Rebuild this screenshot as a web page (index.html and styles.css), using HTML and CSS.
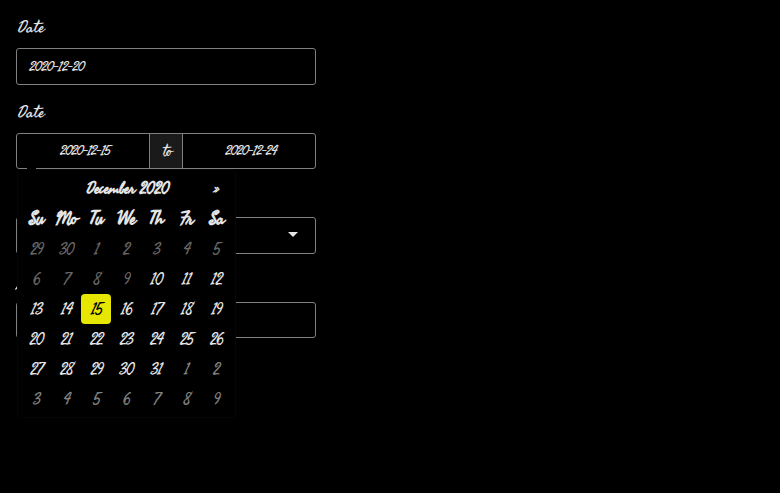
FILE: index.html
```html
<!DOCTYPE html>
<html lang="en">
<head>
<meta charset="utf-8">
<title>Date form</title>
<link rel="stylesheet" href="styles.css">
</head>
<body>
<form class="form">
  <div class="group">
    <div class="label"><span>Date</span></div>
    <div class="field"><span class="value">2020-12-20</span></div>
  </div>
  <div class="group">
    <div class="label"><span>Date</span></div>
    <div class="field range">
      <div class="range-side start"><span class="value">2020-12-15</span></div>
      <div class="range-to"><span class="to">to</span></div>
      <div class="range-side end"><span class="value">2020-12-24</span></div>
    </div>
    <div class="picker">
      <div class="month"><b class="title">December 2020</b><b class="next">»</b></div>
      <div class="days">
        <b>Su</b><b>Mo</b><b>Tu</b><b>We</b><b>Th</b><b>Fr</b><b>Sa</b>
        <span class="off">29</span><span class="off">30</span><span class="off">1</span><span class="off">2</span><span class="off">3</span><span class="off">4</span><span class="off">5</span>
        <span class="off">6</span><span class="off">7</span><span class="off">8</span><span class="off">9</span><span>10</span><span>11</span><span>12</span>
        <span>13</span><span>14</span><span class="active">15</span><span>16</span><span>17</span><span>18</span><span>19</span>
        <span>20</span><span>21</span><span>22</span><span>23</span><span>24</span><span>25</span><span>26</span>
        <span>27</span><span>28</span><span>29</span><span>30</span><span>31</span><span class="new">1</span><span class="new">2</span>
        <span class="new">3</span><span class="new">4</span><span class="new">5</span><span class="new">6</span><span class="new">7</span><span class="new">8</span><span class="new">9</span>
      </div>
    </div>
  </div>
  <div class="group">
    <div class="label"></div>
    <div class="field select"><svg width="10" height="5" viewBox="0 0 10 5"><path d="M0 0h10L5 5z"/></svg></div>
  </div>
  <div class="group">
    <div class="label tail"><svg width="4" height="6" viewBox="0 0 4 6"><path d="M.3 5.2Q1.5 5 3 1.5"/></svg></div>
    <div class="field"></div>
  </div>
</form>
</body>
</html>
```

FILE: styles.css
```css
* { box-sizing: border-box; }
body {
  margin: 0;
  min-height: 493px;
  padding: 16px;
  background: #000;
  color: #e6e6e6;
  font: 400 16px/24px "Seaweed Script", Yesteryear, cursive;
}
.form { width: 300px; }
.group { position: relative; height: 68.5px; margin-bottom: 16px; }
.label { height: 24px; margin-bottom: 8px; padding-left: 1.5px; font-size: 17px; }
.field {
  display: flex;
  align-items: center;
  height: 36.5px;
  padding: 0 12px;
  border: 1px solid #808080;
  border-radius: 3px;
}
.value { font-size: 14px; letter-spacing: -0.9px; padding-top: 3px; }
.range { padding: 0; }
.range-side { flex: 1; padding: 2px 0 0 3px; text-align: center; }
.range-side .value { letter-spacing: -1.2px; }
.range-to {
  display: flex;
  align-items: center;
  justify-content: center;
  width: 34px;
  height: 100%;
  padding: 3px 0 0 2px;
  background: #1a1a1a;
  border: solid #808080;
  border-width: 0 1px;
  font-size: 15px;
  letter-spacing: -1px;
}
.select { justify-content: flex-end; padding-right: 17px; }
.select svg { fill: #e6e6e6; margin-bottom: 2px; }
.tail { padding: 0; }
.tail svg { display: block; position: relative; left: -1px; top: 14px; fill: none; stroke: #e6e6e6; stroke-width: 1.4; }
.picker {
  position: absolute;
  z-index: 2;
  left: 0.5px;
  top: 68.5px;
  width: 219px;
  height: 249px;
  padding: 4px 3.5px;
  background: #000;
  border: 1px solid #04060a;
  border-radius: 3px;
}
.picker::before {
  content: "";
  position: absolute;
  left: 9px;
  top: -2px;
  width: 9px;
  height: 3px;
  background: #000;
}
.month { display: grid; grid-template-columns: 30px 150px 30px; height: 30px; line-height: 30px; text-align: center; letter-spacing: -0.5px; }
.title { grid-column: 2; padding-left: 3px; }
.next { font-size: 14px; padding-left: 1px; }
.days { display: grid; grid-template-columns: repeat(7, 30px); grid-auto-rows: 30px; line-height: 30px; text-align: center; }
.days b { font-size: 18px; letter-spacing: -0.4px; padding-left: 1px; }
.days span { letter-spacing: -1.1px; line-height: 32px; }
.off { color: #666; }
.new { color: #808080; }
.active { background: #e6e600; color: #000; border-radius: 4px; }
```
